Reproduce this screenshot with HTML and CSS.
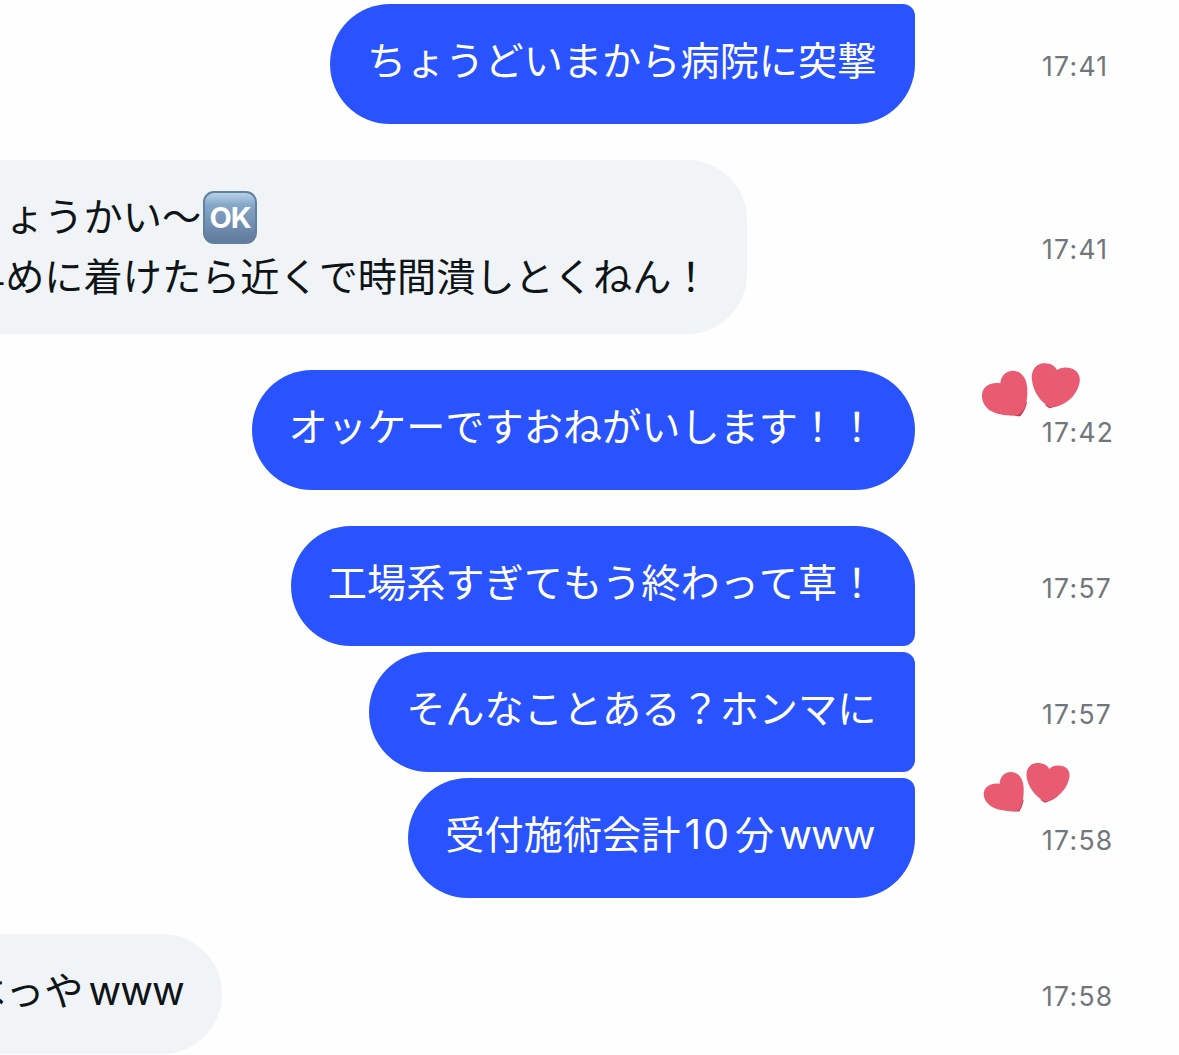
FILE: index.html
```html
<!DOCTYPE html>
<html lang="ja">
<head>
  <meta charset="utf-8">
  <title>Messages</title>
  <link rel="stylesheet" href="styles.css">
</head>
<body>
  <main class="chat">
    <div class="message sent">
      <div class="bubble join-top">ちょうどいまから病院に突撃</div>
      <time class="time">17:41</time>
    </div>

    <div class="message received">
      <div class="bubble">りょうかい〜<span class="ok-badge">OK</span><br>早めに着けたら近くで時間潰しとくねん！</div>
      <time class="time">17:41</time>
    </div>

    <div class="message sent">
      <div class="bubble">オッケーですおねがいします！！</div>
      <time class="time">17:42</time>
      <svg class="hearts" width="100" height="56" viewBox="34 34 300 168">
        <path class="heart-edge" d="M134 195Q148 198 153 195Q168 178 172 155L160 150Z"/>
        <path class="heart" d="M92 98C93 76 109 60 131 60C159 62 174 88 173 125C173 158 165 180 149 191C140 196 128 196 112 194C84 191 64 184 52 172C34 154 32 126 46 110C58 98 77 95 92 98Z"/>
        <path class="heart-edge" d="M226 162Q233 169 240 173Q266 168 284 157L280 140Z"/>
        <path class="heart" d="M262 58C273 49 292 48 308 54C327 62 334 80 329 99C322 127 302 151 274 162C262 167 250 169 241 170C226 161 215 152 205 137C193 118 189 104 187 89C183 62 197 41 219 38C239 35 256 44 262 58Z"/>
      </svg>
    </div>

    <div class="message sent">
      <div class="bubble join-bottom">工場系すぎてもう終わって草！</div>
      <time class="time">17:57</time>
    </div>

    <div class="message sent grouped">
      <div class="bubble join-top join-bottom">そんなことある？ホンマに</div>
      <time class="time">17:57</time>
    </div>

    <div class="message sent grouped">
      <div class="bubble join-top">受付施術会計<span class="latin digits">10</span>分<span class="latin">www</span></div>
      <time class="time">17:58</time>
      <svg class="hearts hearts-small" width="100" height="56" viewBox="34 34 300 168">
        <path class="heart-edge" d="M132 182Q145 184 150 181Q159 167 162 148L150 145Z"/>
        <path class="heart" d="M90 99C91 79 103 64 124 64C150 66 163 88 162 119C162 149 157 169 146 179C138 183 126 183 112 181C88 178 68 172 56 160C39 144 38 122 51 109C62 99 78 97 90 99Z"/>
        <path class="heart-edge" d="M212 147Q219 152 226 156Q248 149 263 138L255 125Z"/>
        <path class="heart" d="M239 55C248 44 266 42 281 47C297 53 303 69 298 85C292 111 273 134 250 145C241 150 232 152 226 153C211 144 199 135 188 120C177 104 173 92 171 79C168 55 181 39 201 37C218 36 234 43 239 55Z"/>
      </svg>
    </div>

    <div class="message received">
      <div class="bubble">はっや<span class="latin">www</span></div>
      <time class="time">17:58</time>
    </div>
  </main>
</body>
</html>
```

FILE: styles.css
```css
body {
  margin: 0;
  overflow: hidden;
  background-color: #fefefe;
  font-family: Inter, "Noto Sans CJK JP", sans-serif;
}

.chat {
  display: flex;
  flex-direction: column;
  gap: 36px;
  margin-left: -72px;
  padding-top: 4px;
}

.message {
  position: relative;
  display: grid;
  grid-template-columns: 1fr 137px;
  column-gap: 127px;
  align-items: center;
}

/* messages sent right after another one sit closer together */
.grouped {
  margin-top: -30px;
}

.bubble {
  box-sizing: border-box;
  min-height: 120px;
  padding: 24px 38.6px 36px 37px;
  border-radius: 60px;
  font-family: "Noto Sans CJK JP", sans-serif;
  font-size: 39.2px;
  font-kerning: none;
  line-height: 60px;
  white-space: nowrap;
}

.sent .bubble {
  justify-self: end;
  background-color: #2953ff;
  color: #ffffff;
}

.received .bubble {
  justify-self: start;
  padding-left: 38px;
  padding-right: 36px;
  background-color: #f0f4f6;
  color: #0f1419;
}

.bubble.join-top {
  border-top-right-radius: 12px;
}

.bubble.join-bottom {
  border-bottom-right-radius: 12px;
}

.received .bubble:has(br) {
  padding-bottom: 30px;
}

.latin {
  padding-left: 5px;
  padding-right: 2px;
  font-family: Inter, sans-serif;
  font-size: 40px;
  line-height: 1;
  letter-spacing: -1px;
}

.digits {
  padding: 0 4px;
  font-size: 41px;
  letter-spacing: 2px;
}

.ok-badge {
  display: inline-block;
  box-sizing: border-box;
  width: 54px;
  height: 53px;
  margin: -8px 0 -2px 2px;
  border: 2px solid #64809f;
  border-radius: 11px;
  background: linear-gradient(#b5d3ea, #86a8c9 24%, #7595b7 55%, #607b9b);
  color: #ffffff;
  font-family: Inter, sans-serif;
  font-size: 29px;
  font-weight: 700;
  line-height: 49px;
  letter-spacing: -1px;
  text-align: center;
  vertical-align: middle;
}

.time {
  margin-top: 3px;
  color: #71767b;
  font-size: 26.5px;
  line-height: 32px;
  letter-spacing: 1.3px;
}

.hearts {
  position: absolute;
  right: 97.7px;
  top: -8.3px;
}

.hearts-small {
  top: -16.3px;
}

.heart {
  fill: #e95b70;
}

.heart-edge {
  fill: #bd3650;
}
```
